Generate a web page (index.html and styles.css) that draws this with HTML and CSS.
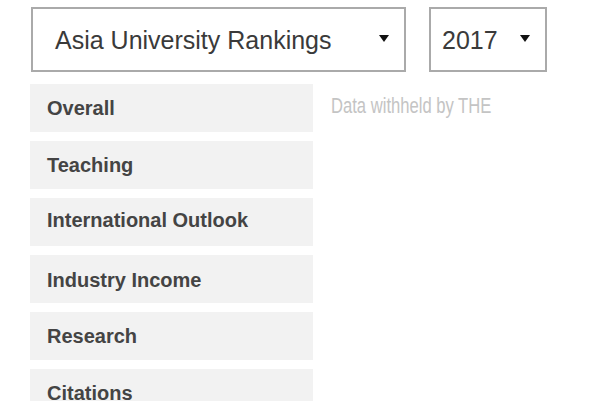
FILE: index.html
```html
<!DOCTYPE html>
<html>
<head>
<meta charset="utf-8">
<link rel="stylesheet" href="styles.css">
</head>
<body>
<div class="page">
  <div class="selects">
    <div class="select select-type">
      <span class="select-label">Asia University Rankings</span>
      <span class="caret"></span>
    </div>
    <div class="select select-year">
      <span class="select-label">2017</span>
      <span class="caret"></span>
    </div>
  </div>
  <div class="content">
    <ul class="tabs">
      <li class="tab">Overall</li>
      <li class="tab">Teaching</li>
      <li class="tab tab-high">International Outlook</li>
      <li class="tab tab-low">Industry Income</li>
      <li class="tab">Research</li>
      <li class="tab">Citations</li>
    </ul>
    <div class="note"><span class="note-text">Data withheld by THE</span></div>
  </div>
</div>
</body>
</html>
```
FILE: styles.css
```css
html, body {
  margin: 0;
  padding: 0;
  background: #fff;
  overflow: hidden;
}
.page {
  padding: 7px 0 0 30px;
  font-family: "Liberation Sans", Arial, sans-serif;
}
.selects {
  display: flex;
  gap: 23px;
  padding-left: 1px;
}
.select {
  box-sizing: border-box;
  height: 65px;
  border: 2px solid #aaaaaa;
  display: flex;
  align-items: center;
  justify-content: space-between;
  color: #3a3a3a;
  font-size: 25px;
}
.select-type {
  width: 375px;
  padding: 2px 15px 0 22px;
}
.select-year {
  width: 118px;
  padding: 2px 15px 0 11px;
}
.caret {
  width: 0;
  height: 0;
  border-left: 5px solid transparent;
  border-right: 5px solid transparent;
  border-top: 7px solid #111;
  margin-bottom: 4px;
}
.content {
  display: flex;
  align-items: flex-start;
  margin-top: 12px;
}
.tabs {
  list-style: none;
  margin: 0;
  padding: 0;
  width: 283px;
  flex-shrink: 0;
}
.tab {
  box-sizing: border-box;
  height: 48px;
  margin-bottom: 9px;
  background: #f2f2f2;
  color: #444;
  font-weight: bold;
  font-size: 20px;
  padding-left: 17px;
  display: flex;
  align-items: center;
}
.tab-high {
  padding-bottom: 3px;
}
.tab-low {
  padding-top: 3px;
}
.note {
  margin-left: 18px;
  padding-top: 9px;
  white-space: nowrap;
}
.note-text {
  display: inline-block;
  color: #c4c4c4;
  font-size: 22px;
  transform: scaleX(0.755);
  transform-origin: left center;
}
```
